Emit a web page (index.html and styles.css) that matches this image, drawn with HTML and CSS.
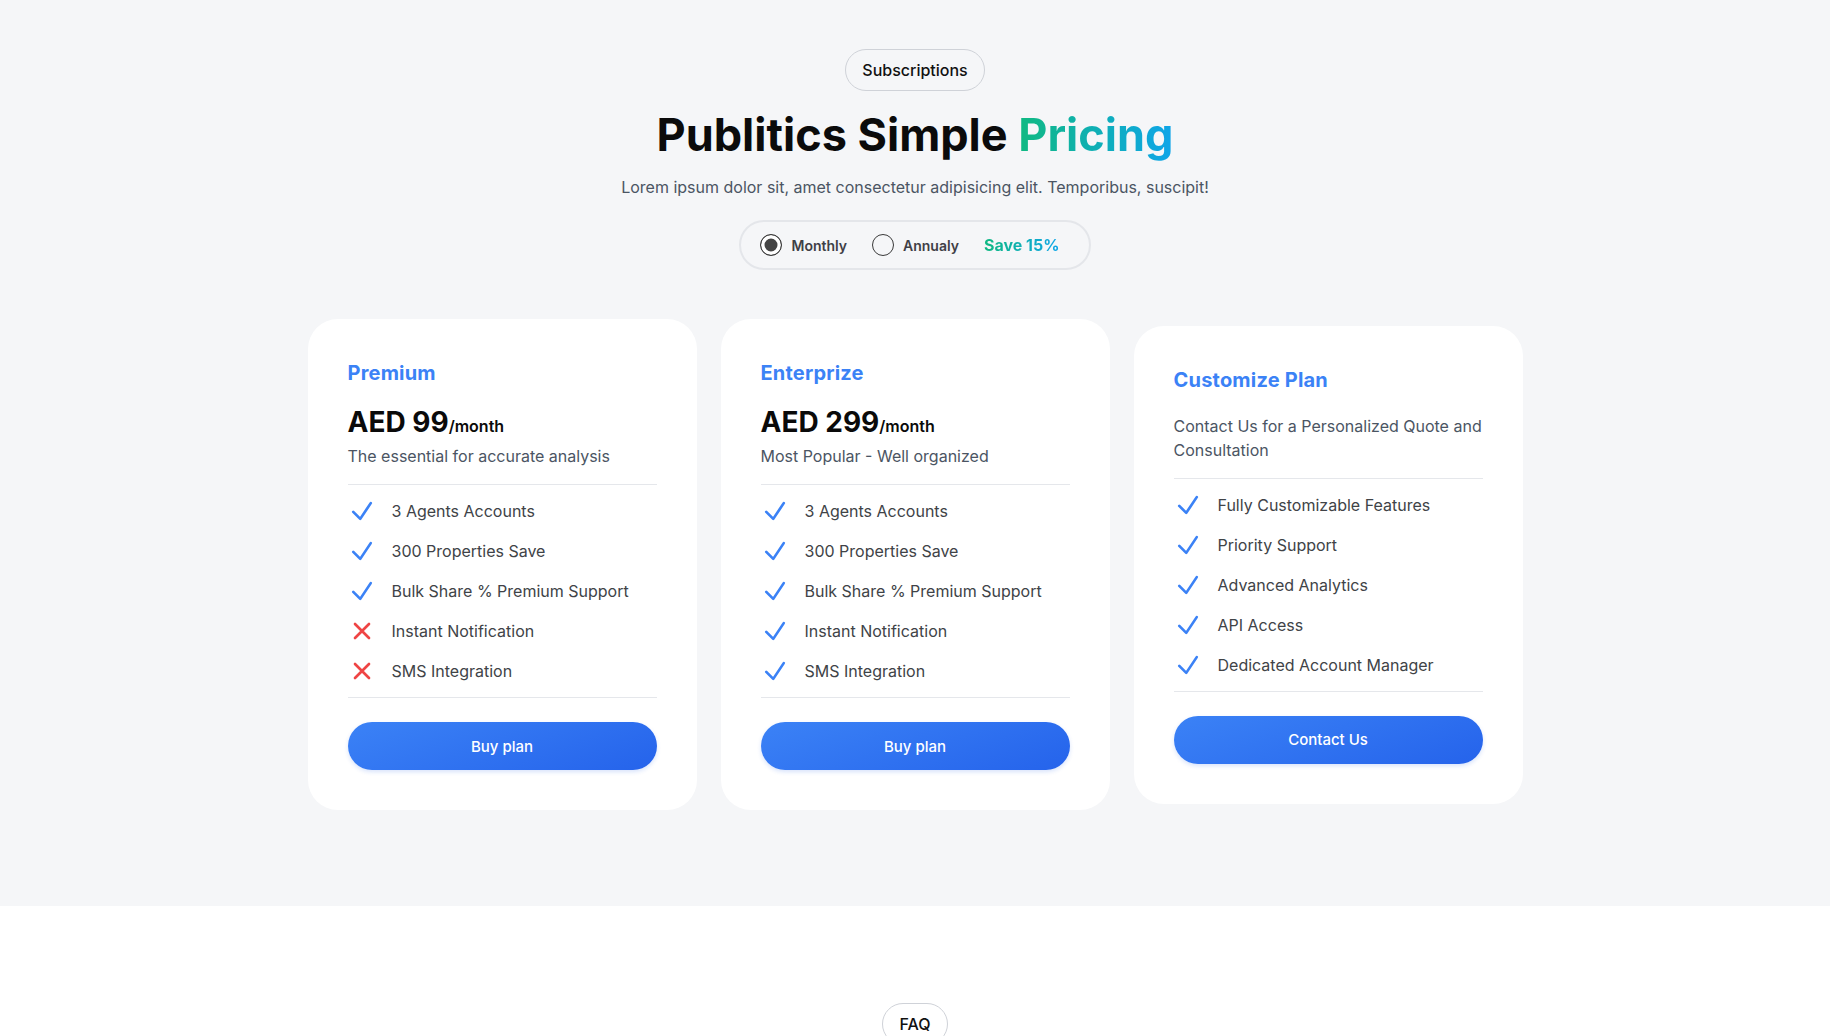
FILE: index.html
```html
<!DOCTYPE html>
<html lang="en">
<head>
<meta charset="utf-8">
<title>Publitics Simple Pricing</title>
<link rel="stylesheet" href="styles.css">
</head>
<body>
<section class="pricing">
  <span class="pill">Subscriptions</span>
  <h1 class="title">Publitics Simple <span class="grad">Pricing</span></h1>
  <p class="sub">Lorem ipsum dolor sit, amet consectetur adipisicing elit. Temporibus, suscipit!</p>
  <div class="toggle">
    <label class="opt"><span class="radio checked"></span>Monthly</label>
    <label class="opt"><span class="radio"></span>Annualy</label>
    <span class="save grad">Save 15%</span>
  </div>

  <div class="cards">
    <div class="card">
      <h3 class="plan">Premium</h3>
      <div class="price">AED 99<span class="per">/month</span></div>
      <p class="desc">The essential for accurate analysis</p>
      <hr class="rule">
      <ul class="features">
        <li><svg class="ic ok" viewBox="0 0 24 24"><path d="m4.5 12.75 6 6 9-13.5"/></svg>3 Agents Accounts</li>
        <li><svg class="ic ok" viewBox="0 0 24 24"><path d="m4.5 12.75 6 6 9-13.5"/></svg>300 Properties Save</li>
        <li><svg class="ic ok" viewBox="0 0 24 24"><path d="m4.5 12.75 6 6 9-13.5"/></svg>Bulk Share % Premium Support</li>
        <li><svg class="ic no" viewBox="0 0 24 24"><path d="M6 18 18 6M6 6l12 12"/></svg>Instant Notification</li>
        <li><svg class="ic no" viewBox="0 0 24 24"><path d="M6 18 18 6M6 6l12 12"/></svg>SMS Integration</li>
      </ul>
      <hr class="rule">
      <button class="btn">Buy plan</button>
    </div>

    <div class="card">
      <h3 class="plan">Enterprize</h3>
      <div class="price">AED 299<span class="per">/month</span></div>
      <p class="desc">Most Popular - Well organized</p>
      <hr class="rule">
      <ul class="features">
        <li><svg class="ic ok" viewBox="0 0 24 24"><path d="m4.5 12.75 6 6 9-13.5"/></svg>3 Agents Accounts</li>
        <li><svg class="ic ok" viewBox="0 0 24 24"><path d="m4.5 12.75 6 6 9-13.5"/></svg>300 Properties Save</li>
        <li><svg class="ic ok" viewBox="0 0 24 24"><path d="m4.5 12.75 6 6 9-13.5"/></svg>Bulk Share % Premium Support</li>
        <li><svg class="ic ok" viewBox="0 0 24 24"><path d="m4.5 12.75 6 6 9-13.5"/></svg>Instant Notification</li>
        <li><svg class="ic ok" viewBox="0 0 24 24"><path d="m4.5 12.75 6 6 9-13.5"/></svg>SMS Integration</li>
      </ul>
      <hr class="rule">
      <button class="btn">Buy plan</button>
    </div>

    <div class="card">
      <h3 class="plan">Customize Plan</h3>
      <p class="desc desc-custom">Contact Us for a Personalized Quote and Consultation</p>
      <hr class="rule">
      <ul class="features">
        <li><svg class="ic ok" viewBox="0 0 24 24"><path d="m4.5 12.75 6 6 9-13.5"/></svg>Fully Customizable Features</li>
        <li><svg class="ic ok" viewBox="0 0 24 24"><path d="m4.5 12.75 6 6 9-13.5"/></svg>Priority Support</li>
        <li><svg class="ic ok" viewBox="0 0 24 24"><path d="m4.5 12.75 6 6 9-13.5"/></svg>Advanced Analytics</li>
        <li><svg class="ic ok" viewBox="0 0 24 24"><path d="m4.5 12.75 6 6 9-13.5"/></svg>API Access</li>
        <li><svg class="ic ok" viewBox="0 0 24 24"><path d="m4.5 12.75 6 6 9-13.5"/></svg>Dedicated Account Manager</li>
      </ul>
      <hr class="rule">
      <button class="btn">Contact Us</button>
    </div>
  </div>
</section>

<section class="faq">
  <span class="pill">FAQ</span>
  <h2 class="faq-title">Frequently Asked Questions</h2>
</section>
</body>
</html>
```

FILE: styles.css
```css
html {
  scrollbar-width: none;
}
html::-webkit-scrollbar {
  display: none;
}
body {
  margin: 0;
  font-family: Inter, "Noto Sans", "Liberation Sans", sans-serif;
  color: #0a0a0a;
  background: #ffffff;
}

.pricing {
  background: #f5f6f8;
  display: flex;
  flex-direction: column;
  align-items: center;
  padding: 49px 0 96px;
}

.pill {
  display: inline-block;
  padding: 9px 16px;
  border: 1px solid #cfd2d8;
  border-radius: 999px;
  font-size: 16px;
  line-height: 22px;
  font-weight: 500;
  color: #111111;
}

.title {
  margin: 17px 0 0;
  font-size: 45px;
  line-height: 54px;
  font-weight: 700;
  color: #0b0b0b;
}

.grad {
  background: linear-gradient(to right, #10b981, #0ea5e9);
  -webkit-background-clip: text;
  background-clip: text;
  color: transparent;
}

.sub {
  margin: 13px 0 0;
  font-size: 16px;
  line-height: 24px;
  color: #4b5563;
}

.toggle {
  margin-top: 21px;
  height: 46px;
  display: flex;
  align-items: center;
  padding: 0 29px 0 19px;
  border: 2px solid #e4e6ea;
  border-radius: 999px;
}

.opt {
  display: flex;
  align-items: center;
  gap: 9px;
  font-size: 14px;
  font-weight: 600;
  color: #3f3f46;
  margin-right: 25px;
}

.radio {
  width: 20px;
  height: 20px;
  border: 1.5px solid #3a3a3a;
  border-radius: 50%;
  background: transparent;
}
.radio.checked {
  background: #444444;
  box-shadow: inset 0 0 0 3.5px #ffffff;
}

.save {
  font-size: 16px;
  font-weight: 700;
}

.cards {
  margin-top: 49px;
  display: grid;
  grid-template-columns: repeat(3, 389px);
  gap: 24px;
  align-items: center;
}

.card {
  background: #ffffff;
  border-radius: 30px;
  padding: 40px;
}

.plan {
  margin: 0;
  font-size: 20px;
  line-height: 28px;
  font-weight: 700;
  color: #3b82f6;
  letter-spacing: 0.01em;
}

.price {
  margin-top: 17px;
  font-size: 28px;
  line-height: 36px;
  font-weight: 700;
  color: #0a0a0a;
}
.per {
  font-size: 16px;
  font-weight: 600;
}

.desc {
  margin: 0;
  font-size: 16px;
  line-height: 24px;
  color: #4b5563;
}
.desc-custom {
  margin-top: 20px;
}

.rule {
  margin: 16px 0 0;
  border: 0;
  border-top: 1px solid #e5e7eb;
  height: 0;
}
.features + .rule {
  margin-top: 0;
}

.features {
  list-style: none;
  margin: 0;
  padding: 6px 0;
}
.features li {
  display: flex;
  align-items: center;
  gap: 16px;
  height: 40px;
  font-size: 16px;
  color: #404347;
}

.ic {
  width: 28px;
  height: 28px;
  flex: none;
  fill: none;
  stroke-width: 2.3;
  stroke-linecap: round;
  stroke-linejoin: round;
}
.ic.ok { stroke: #3b82f6; }
.ic.no { stroke: #ef4444; }

.btn {
  display: block;
  width: 100%;
  height: 48px;
  margin-top: 24px;
  border: 0;
  border-radius: 999px;
  background: linear-gradient(160deg, #3b82f6, #2563eb);
  color: #ffffff;
  font-family: inherit;
  font-size: 15px;
  font-weight: 500;
  box-shadow: 0 2px 4px rgba(37, 99, 235, 0.18);
}

.faq {
  display: flex;
  flex-direction: column;
  align-items: center;
  padding: 97px 0 80px;
  background: #ffffff;
}
.faq-title {
  margin: 17px 0 0;
  font-size: 45px;
  line-height: 54px;
  font-weight: 700;
}
```
